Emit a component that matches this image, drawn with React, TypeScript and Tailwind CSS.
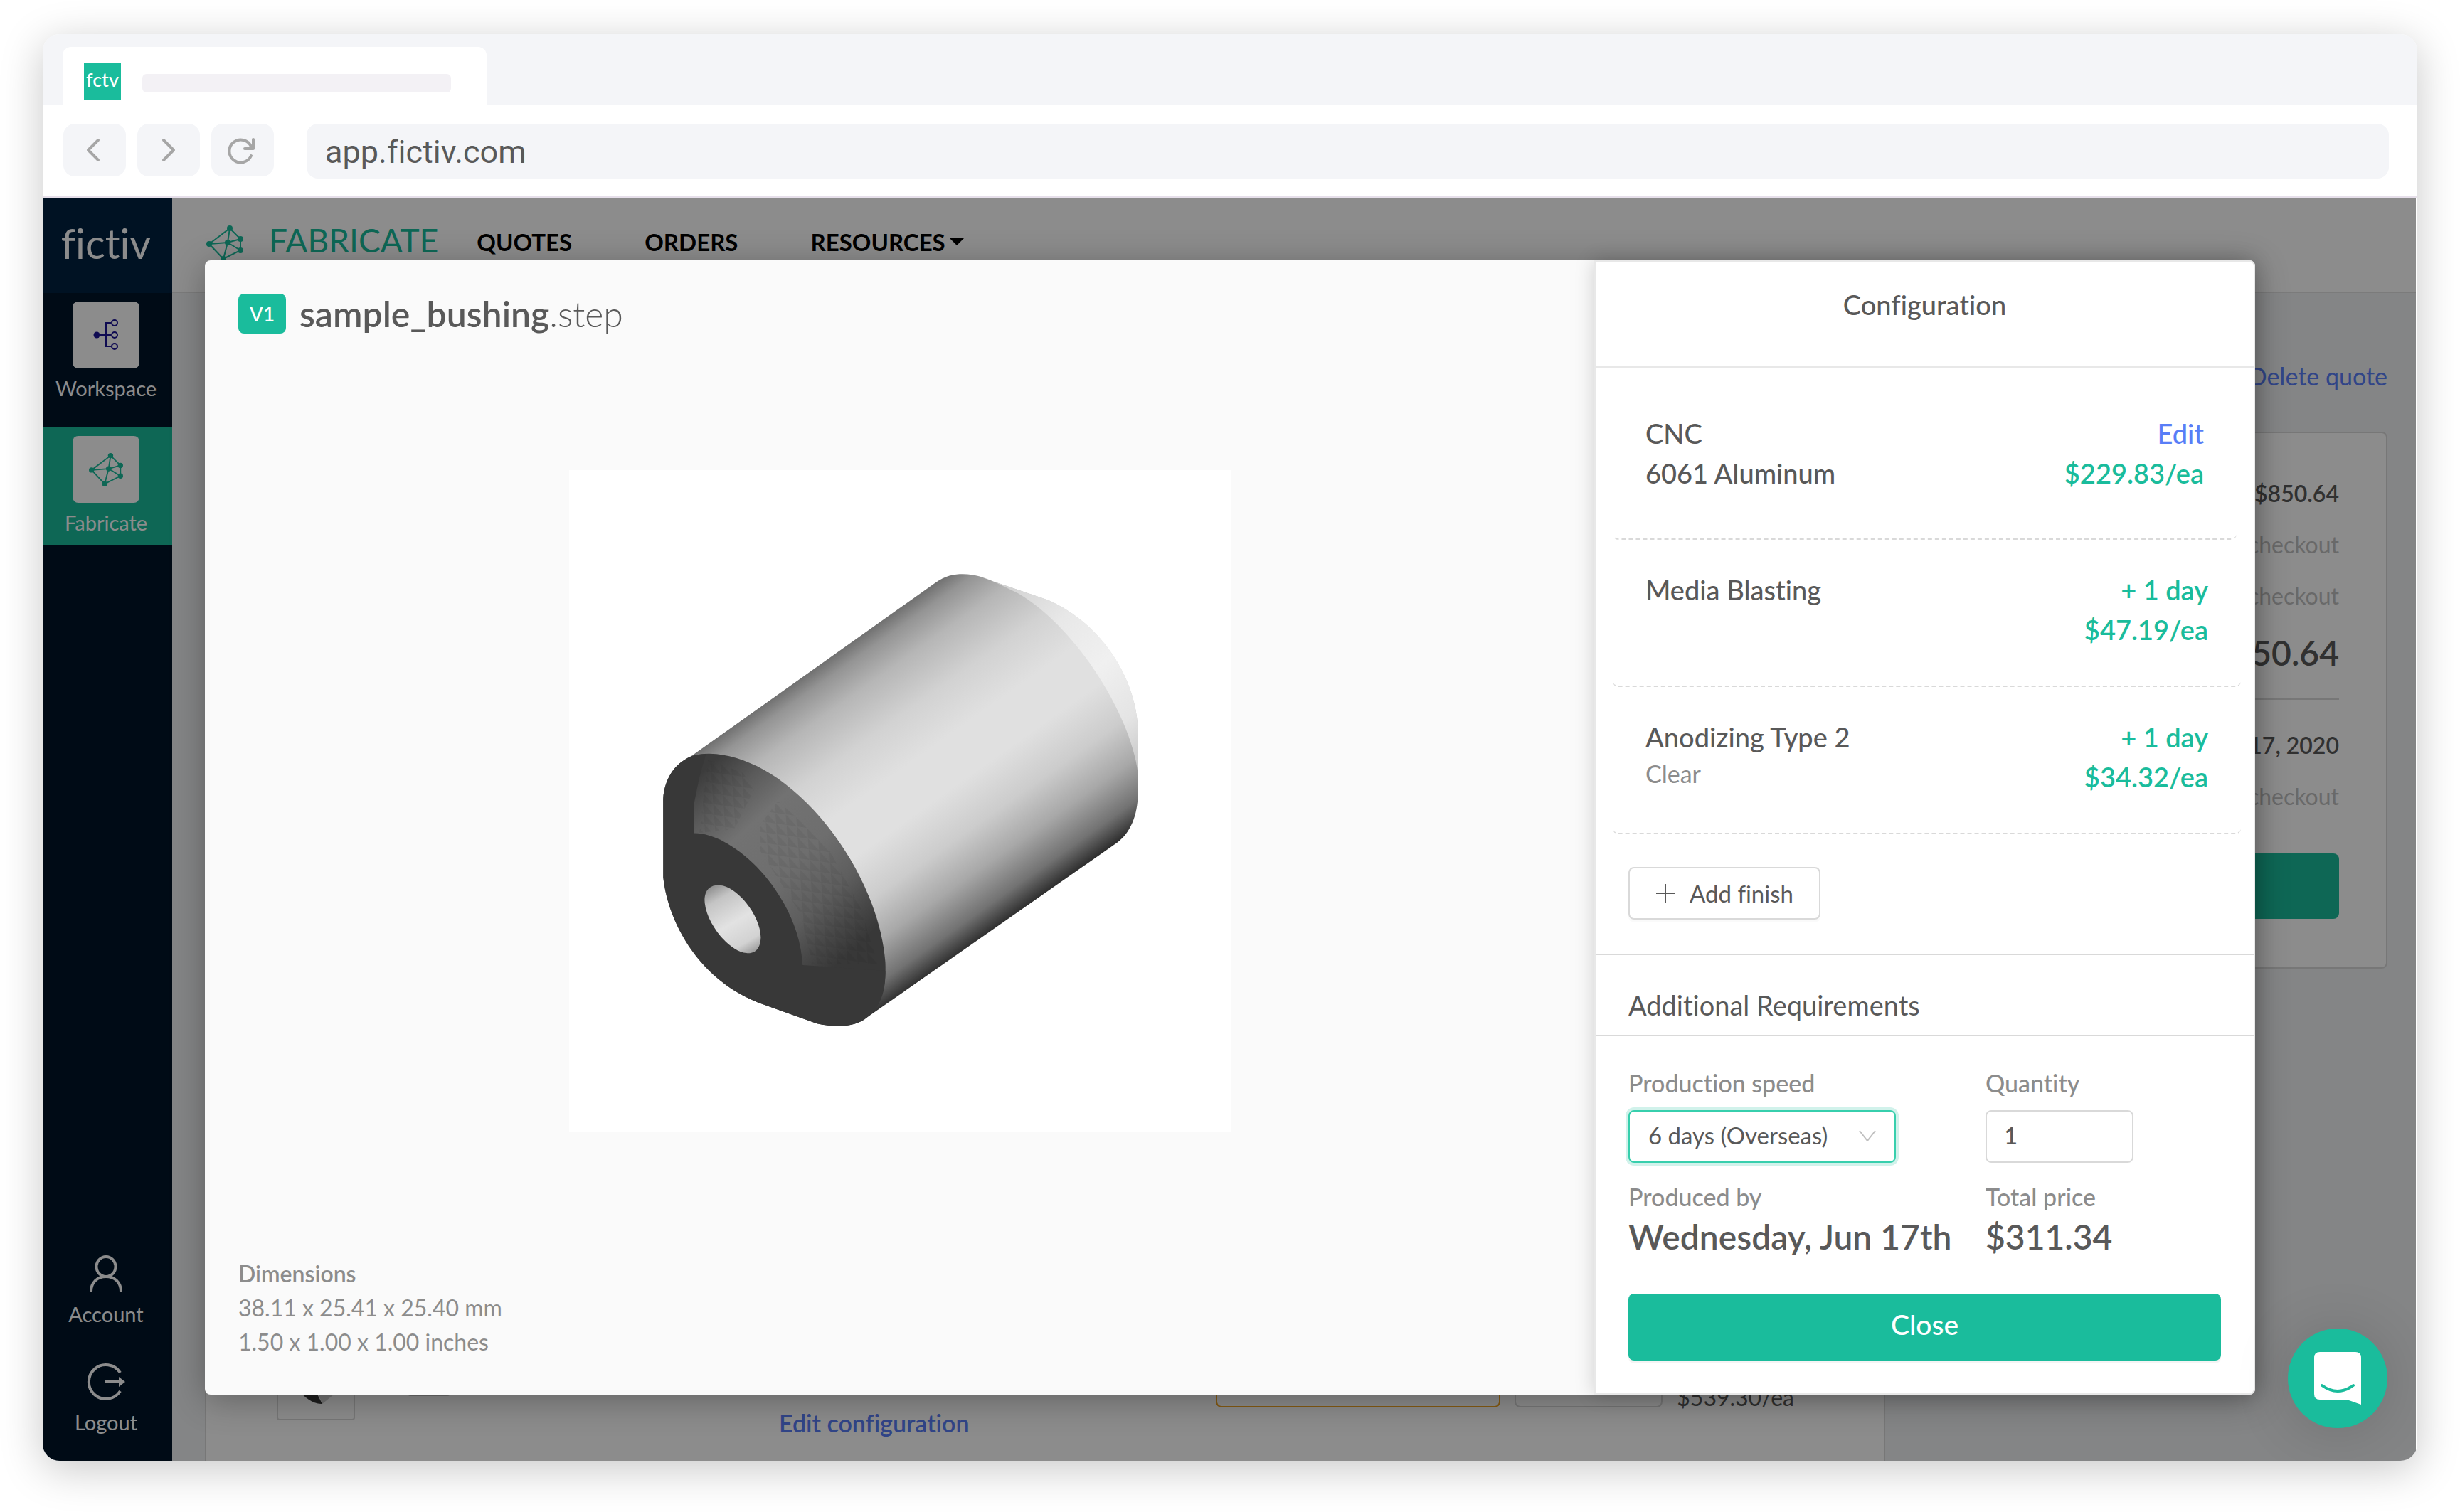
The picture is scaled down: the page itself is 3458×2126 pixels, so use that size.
import React from 'react';

interface Finish {
  name: string;
  option?: string;
  time: string;
  price: string;
}

const finishes: Finish[] = [
  { name: 'Media Blasting', time: '+ 1 day', price: '$47.19/ea' },
  { name: 'Anodizing Type 2', option: 'Clear', time: '+ 1 day', price: '$34.32/ea' },
];

const FabricateIcon: React.FC<{ className?: string }> = ({ className }) => (
  <svg viewBox="0 0 52 52" className={className} fill="none" stroke="#1abc9c" strokeWidth="2" aria-hidden="true">
    <path d="M33 5 4 27 24 48 48 36 48 20 33 5 30 25 24 48M4 27 30 25 48 20M30 25 48 36" />
    <g fill="#1abc9c" stroke="none">
      <circle cx="33" cy="5" r="4" />
      <circle cx="4" cy="27" r="4" />
      <circle cx="24" cy="48" r="4" />
      <circle cx="48" cy="36" r="4" />
      <circle cx="48" cy="20" r="4" />
      <circle cx="30" cy="25" r="4" />
    </g>
  </svg>
);

const WorkspaceIcon: React.FC = () => (
  <svg viewBox="0 0 36 44" className="w-9 h-11" fill="none" stroke="#1d1496" strokeWidth="2" aria-hidden="true">
    <path d="M5 22h20M25 5H18v33h7" />
    <circle cx="5" cy="22" r="4.5" fill="#1d1496" stroke="none" />
    <circle cx="30" cy="5" r="4" />
    <circle cx="30" cy="22" r="4" />
    <circle cx="30" cy="38" r="4" />
  </svg>
);

const BushingModel: React.FC<{ className?: string }> = ({ className }) => (
  <svg viewBox="31 35 1519 1519" className={className} role="img" aria-label="sample_bushing model">
    <defs>
      <linearGradient id="body" gradientUnits="userSpaceOnUse" x1="595" y1="490" x2="1015" y2="1082">
        <stop offset="0" stopColor="#707070" />
        <stop offset="0.05" stopColor="#949494" />
        <stop offset="0.14" stopColor="#b6b6b6" />
        <stop offset="0.28" stopColor="#d2d2d2" />
        <stop offset="0.42" stopColor="#e0e0e0" />
        <stop offset="0.56" stopColor="#e0e0e0" />
        <stop offset="0.7" stopColor="#cccccc" />
        <stop offset="0.82" stopColor="#a8a8a8" />
        <stop offset="0.93" stopColor="#727272" />
        <stop offset="1" stopColor="#303030" />
      </linearGradient>
      <linearGradient id="chamfer" gradientUnits="userSpaceOnUse" x1="300" y1="760" x2="700" y2="1200">
        <stop offset="0" stopColor="#3c3c3c" />
        <stop offset="0.14" stopColor="#5a5a5a" />
        <stop offset="0.28" stopColor="#727272" />
        <stop offset="0.5" stopColor="#6e6e6e" />
        <stop offset="0.68" stopColor="#5e5e5e" />
        <stop offset="0.8" stopColor="#484848" />
        <stop offset="0.9" stopColor="#383838" />
      </linearGradient>
      <linearGradient id="back" gradientUnits="userSpaceOnUse" x1="1000" y1="300" x2="1350" y2="720">
        <stop offset="0" stopColor="#cfcfcf" />
        <stop offset="0.3" stopColor="#e8e8e8" />
        <stop offset="0.55" stopColor="#f0f0f0" />
        <stop offset="0.8" stopColor="#e4e4e4" />
        <stop offset="1" stopColor="#c4c4c4" />
      </linearGradient>
      <linearGradient id="hole" gradientUnits="userSpaceOnUse" x1="365" y1="985" x2="455" y2="1140">
        <stop offset="0" stopColor="#8c8c8c" />
        <stop offset="0.2" stopColor="#c4c4c4" />
        <stop offset="0.55" stopColor="#e2e2e2" />
        <stop offset="0.85" stopColor="#d2d2d2" />
        <stop offset="1" stopColor="#a0a0a0" />
      </linearGradient>
      <pattern id="facets" width="24" height="24" patternUnits="userSpaceOnUse" patternTransform="rotate(8) skewX(12)">
        <path d="M0 0 24 24H0z" fill="#000" fillOpacity="0.05" />
      </pattern>
    </defs>
    <path
      fill="url(#body)"
      d="M310 693 870 295C895 277 915 274 935 274 965 274 985 283 1006 291L1130 333C1250 385 1333 510 1337 630V780C1336 828 1320 868 1290 890L715 1292 500 1000z"
    />
    <path
      fill="url(#back)"
      d="M1006 291 1130 333C1250 385 1333 510 1337 630V730C1320 600 1200 400 1062 318z"
    />
    <path
      fill="url(#chamfer)"
      d="M247 790C250 745 272 710 310 693 360 675 440 694 510 743 640 835 745 1010 757 1165 760 1230 745 1268 715 1292 690 1314 645 1316 600 1306L465 1258C330 1205 258 1075 247 970z"
    />
    <path
      fill="url(#facets)"
      d="M350 700 430 730 455 770 410 860 330 868zM510 795 550 830 630 910 700 1040 740 1170 590 1168 560 1050 470 910 470 850z"
    />
    <path
      fill="#383838"
      d="M345 687 330 740 318 800 318 869C420 870 560 1020 567 1172L757 1185C758 1235 745 1268 715 1292 690 1314 645 1316 600 1306L465 1258C330 1205 258 1075 247 970V790C250 745 272 710 310 693 320 689 332 687 345 687z"
    />
    <path
      fill="url(#hole)"
      d="M370 988C412 985 470 1055 471 1108 470 1138 455 1146 438 1144 400 1142 343 1075 342 1022 343 998 355 990 370 988z"
    />
  </svg>
);

const Sidebar: React.FC = () => (
  <aside className="w-[182px] shrink-0 bg-[#001529] text-white text-[29px] leading-9 flex flex-col">
    <div className="h-[134px] shrink-0 pr-1 pb-1.5 bg-[#002140] flex items-center justify-center text-[58px]">fictiv</div>
    <nav className="flex flex-col gap-6">
      <a href="#workspace" className="h-[165px] pt-3 pr-1 flex flex-col items-center gap-2.5">
        <span className="w-[94px] h-[94px] shrink-0 bg-white rounded-lg flex items-center justify-center">
          <WorkspaceIcon />
        </span>
        Workspace
      </a>
      <a href="#fabricate" className="h-[165px] pt-3 pr-1 bg-[#1abc9c] flex flex-col items-center gap-2.5">
        <span className="w-[94px] h-[94px] shrink-0 bg-white rounded-lg flex items-center justify-center">
          <FabricateIcon className="w-12 h-12" />
        </span>
        Fabricate
      </a>
    </nav>
    <div className="mt-auto pr-1 pb-9 flex flex-col gap-[50px]">
      <a href="#account" className="flex flex-col items-center gap-3">
        <svg viewBox="0 0 54 54" className="w-[54px] h-[54px]" fill="none" stroke="currentColor" strokeWidth="4" aria-hidden="true">
          <ellipse cx="27" cy="17" rx="13.5" ry="14" />
          <path d="M6 52C6 39 15 31 27 31S48 39 48 52" />
        </svg>
        Account
      </a>
      <a href="#logout" className="flex flex-col items-center gap-3">
        <svg viewBox="0 0 54 54" className="w-[54px] h-[54px]" fill="none" stroke="currentColor" strokeWidth="4" aria-hidden="true">
          <path d="M47 14A24 24 0 1 0 47 40" />
          <path d="M25 27H46" />
          <path d="M45 20 54 27 45 34z" fill="currentColor" stroke="none" />
        </svg>
        Logout
      </a>
    </div>
  </aside>
);

const QuotePage: React.FC = () => (
  <div className="flex-1 min-w-0 bg-[#f0f2f5] text-[#595959] flex flex-col">
    <header className="h-[134px] shrink-0 bg-white border-b-2 border-[#e0e0e0] pl-12 pt-7 flex items-start">
      <FabricateIcon className="w-[52px] h-[52px] mt-2.5" />
      <span className="ml-9 text-[46px] leading-[64px] text-[#1abc9c]">FABRICATE</span>
      <nav className="ml-[54px] pt-1 flex gap-[102px] text-[33px] leading-[60px] font-bold text-black">
        <a href="#quotes">QUOTES</a>
        <a href="#orders">ORDERS</a>
        <a href="#resources" className="flex items-center gap-1.5">
          RESOURCES
          <svg viewBox="0 0 20 10" className="w-5 h-2.5" aria-hidden="true">
            <path d="M0 0H20L10 10z" />
          </svg>
        </a>
      </nav>
    </header>

    <main className="flex-1 flex pl-[46px] pr-10 gap-12">
      {/* Part list */}
      <section className="flex-1 min-w-0 bg-white border-x-2 border-[#d9d9d9] flex flex-col justify-end">
        <div className="pl-[99px] pb-[57px] flex items-end">
          <div className="w-[110px] h-[110px] border-2 border-[#d9d9d9] rounded">
            <svg viewBox="0 0 106 106" className="w-full h-full" aria-hidden="true">
              <path d="M16 50 44 50 62 85C50 86 36 76 26 62z" fill="#383838" />
              <path d="M44 40 98 40 90 62 62 85z" fill="#cfcfcf" />
            </svg>
          </div>
          <div className="ml-[74px] mb-[34px] w-[60px] h-8 rounded bg-[#e0e0e0] border-b-2 border-[#c4c4c4]" />
          <a href="#edit" className="ml-[462px] -mb-7 text-[34px] leading-[48px] font-semibold text-[#597ef7]">
            Edit configuration
          </a>
          <div className="ml-auto mb-[18px] w-[400px] h-[76px] border-2 border-[#f5a623] rounded-lg" />
          <div className="ml-5 mb-[18px] w-[208px] h-[76px] border-2 border-[#d9d9d9] rounded-lg" />
          <span className="ml-5 mb-2 mr-[126px] text-[32px] leading-[48px]">$539.30/ea</span>
        </div>
      </section>

      {/* Order summary */}
      <section className="w-[658px] shrink-0 text-[32px] leading-[48px] text-right">
        <a href="#delete" className="block mt-[93px] text-[34px] text-[#597ef7]">Delete quote</a>
        <div className="mt-[54px] pt-[61px] px-[66px] pb-14 bg-white border-2 border-[#d9d9d9] rounded-lg">
          <div className="font-semibold">$850.64</div>
          <div className="mt-6 text-[#bfbfbf]">checkout</div>
          <div className="mt-6 text-[#bfbfbf]">checkout</div>
          <div className="mt-6 text-[48px] leading-[64px] font-semibold">$850.64</div>
          <div className="mt-8 mb-10 border-t-2 border-[#d9d9d9]" />
          <div className="font-semibold">Jun 17, 2020</div>
          <div className="mt-6 text-[#bfbfbf]">checkout</div>
          <button aria-label="Checkout" className="mt-14 w-full h-[92px] rounded-lg bg-[#1abc9c]" />
        </div>
      </section>
    </main>
  </div>
);

const ConfigurationPanel: React.FC = () => (
  <aside className="relative w-[929px] shrink-0 bg-white border-2 border-[#e8e8e8] rounded-r-lg shadow-[0_0_28px_rgba(0,0,0,0.18)] text-[38px] leading-[56px] font-medium">
    <h2 className="pt-8 pb-[59px] text-center border-b-2 border-[#e8e8e8]">Configuration</h2>

    <div className="mx-6 px-[46px] py-16 border-b-2 border-dashed border-[#d9d9d9] rounded-lg flex justify-between">
      <div>
        <div>CNC</div>
        <div>6061 Aluminum</div>
      </div>
      <div className="text-right">
        <a href="#edit-process" className="text-[#597ef7]">Edit</a>
        <div className="font-semibold text-[#1abc9c]">$229.83/ea</div>
      </div>
    </div>

    {finishes.map((finish) => (
      <div
        key={finish.name}
        className="ml-6 mr-[18px] px-[46px] pt-[42px] pb-[51px] border-b-2 border-dashed border-[#d9d9d9] rounded-lg flex justify-between"
      >
        <div>
          <div>{finish.name}</div>
          {finish.option && (
            <div className="text-[34px] leading-[48px] font-normal text-[#8c8c8c]">{finish.option}</div>
          )}
        </div>
        <div className="text-right font-semibold text-[#1abc9c]">
          <div>{finish.time}</div>
          <div>{finish.price}</div>
        </div>
      </div>
    ))}

    <div className="px-[46px] pt-[46px] pb-12 border-b-2 border-[#d9d9d9] flex">
      <button className="h-[74px] px-9 border-2 border-[#d9d9d9] rounded-lg shadow-[0_4px_0_rgba(0,0,0,0.02)] flex items-center gap-5 text-[33px] font-normal">
        <svg viewBox="0 0 28 28" className="w-7 h-7" stroke="currentColor" strokeWidth="2" aria-hidden="true">
          <path d="M14 1V27M1 14H27" />
        </svg>
        Add finish
      </button>
    </div>

    <h3 className="px-[46px] pt-[42px] pb-3.5 font-normal border-b-2 border-[#d9d9d9]">Additional Requirements</h3>

    <div className="px-[46px] pt-[42px] pb-11">
      <div className="grid grid-cols-[502px_1fr] text-[34px] leading-[48px] text-[#8c8c8c]">
        <label htmlFor="speed">Production speed</label>
        <label htmlFor="quantity">Quantity</label>
        <div className="relative mt-3.5 w-[376px]">
          <select
            id="speed"
            className="block w-full h-[74px] pl-[26px] pb-1 appearance-none bg-white border-2 border-[#37cfad] rounded-lg shadow-[0_0_0_4px_rgba(26,188,156,0.2)] text-[33px] font-normal text-[#595959] outline-none"
          >
            <option>6 days (Overseas)</option>
          </select>
          <svg viewBox="0 0 24 16" className="absolute right-7 top-7 w-6 h-4 pointer-events-none" fill="none" stroke="#bfbfbf" strokeWidth="2" aria-hidden="true">
            <path d="M1 1 12 15 23 1" />
          </svg>
        </div>
        <input
          id="quantity"
          type="text"
          defaultValue="1"
          className="mt-3.5 w-[208px] h-[74px] pl-6 pb-1 border-2 border-[#d9d9d9] rounded-lg text-[33px] text-[#595959]"
        />
        <div className="mt-6">Produced by</div>
        <div className="mt-6">Total price</div>
        <div className="text-[48px] leading-[64px] font-semibold text-[#595959]">Wednesday, Jun 17th</div>
        <div className="text-[48px] leading-[64px] font-semibold text-[#595959]">$311.34</div>
      </div>
      <button className="mt-12 w-full h-[94px] pb-2 rounded-lg bg-[#1abc9c] shadow-[0_4px_0_rgba(0,0,0,0.045)] text-[39px] text-white">
        Close
      </button>
    </div>
  </aside>
);

export default function App() {
  return (
    <div className="min-h-screen bg-white pt-12 pl-[60px] pr-[60px] pb-[72px] flex flex-col font-['Lato',sans-serif] [font-variant-ligatures:none] text-[#595959]">
      <div className="flex-1 flex flex-col bg-white rounded-3xl overflow-hidden shadow-[0_12px_60px_rgba(0,0,0,0.22)]">
        {/* Browser chrome */}
        <div className="h-[100px] shrink-0 bg-[#f4f5f8] pl-7 flex items-end">
          <div className="w-[596px] h-[82px] bg-white rounded-t-xl pl-[30px] flex items-center">
            <div className="w-[52px] h-[52px] mt-3.5 bg-[#1abc9c] text-white text-[27px] leading-[48px] font-medium text-center">fctv</div>
            <div className="ml-[30px] mt-5 w-[434px] h-[26px] rounded-md bg-[#f3f1f5]" />
          </div>
        </div>
        <div className="h-[130px] shrink-0 pl-[29px] pr-10 pt-[26px] flex items-start gap-4 border-b-3 border-[#e6dfea]">
          <button aria-label="Back" className="w-[88px] h-[74px] pr-1 rounded-2xl bg-[#f4f5f8] flex items-center justify-center">
            <svg viewBox="0 0 20 34" className="w-5 h-[34px]" fill="none" stroke="#a6a6a6" strokeWidth="4" strokeLinecap="round" strokeLinejoin="round">
              <path d="M17 3 3 17 17 31" />
            </svg>
          </button>
          <button aria-label="Forward" className="w-[88px] h-[74px] rounded-2xl bg-[#f4f5f8] flex items-center justify-center">
            <svg viewBox="0 0 20 34" className="w-5 h-[34px]" fill="none" stroke="#a6a6a6" strokeWidth="4" strokeLinecap="round" strokeLinejoin="round">
              <path d="M3 3 17 17 3 31" />
            </svg>
          </button>
          <button aria-label="Reload" className="w-[88px] h-[74px] pr-1 rounded-2xl bg-[#f4f5f8] flex items-center justify-center">
            <svg viewBox="0 0 40 38" className="w-10 h-[38px]" fill="none" stroke="#a6a6a6" strokeWidth="4" strokeLinecap="round" strokeLinejoin="round">
              <path d="M34 27A16 16 0 1 1 34 14" />
              <path d="M37 4V17H25" />
            </svg>
          </button>
          <input
            aria-label="Address"
            type="text"
            defaultValue="app.fictiv.com"
            className="ml-[30px] flex-1 min-w-0 h-[77px] px-[26px] pt-0.5 rounded-2xl bg-[#f4f5f8] font-['Roboto',sans-serif] text-[45px]"
          />
        </div>

        {/* The quote page with the part dialog stacked over it */}
        <div className="flex-1 grid pr-0.5">
          <div className="col-start-1 row-start-1 min-w-0 flex">
            <Sidebar />
            <QuotePage />
          </div>
          <div className="relative col-start-1 row-start-1 min-w-0 bg-black/45 pt-[88px] pl-[228px] pr-[226px] pb-[93px] flex">
            <div role="dialog" aria-label="sample_bushing.step" className="flex-1 min-w-0 bg-[#fafafa] rounded-lg shadow-[0_8px_48px_rgba(0,0,0,0.3)] flex">
              <section className="flex-1 min-w-0 overflow-hidden px-[47px] pt-[47px] pb-[50px] flex flex-col">
                <div className="flex items-center gap-[19px]">
                  <span className="w-[67px] h-14 rounded-lg bg-[#1abc9c] text-white text-[28px] font-medium flex items-center justify-center">V1</span>
                  <h1 className="text-[50px] leading-[56px]">
                    <span className="font-semibold">sample_bushing</span>
                    <span className="font-light">.step</span>
                  </h1>
                </div>
                <div className="mt-48 mx-auto w-[930px] h-[930px] bg-white">
                  <BushingModel className="w-full h-full" />
                </div>
                <div className="mt-auto text-[32px] leading-[48px] text-[#8c8c8c]">
                  <div className="font-semibold">Dimensions</div>
                  <div>38.11 x 25.41 x 25.40 mm</div>
                  <div>1.50 x 1.00 x 1.00 inches</div>
                </div>
              </section>
              <ConfigurationPanel />
            </div>

            {/* Chat launcher */}
            <button
              aria-label="Open chat"
              className="absolute right-10 bottom-[46px] w-[140px] h-[140px] rounded-full bg-[#1abc9c] shadow-[0_4px_80px_rgba(0,0,0,0.15)] flex items-center justify-center"
            >
              <svg viewBox="0 0 66 74" className="w-[66px] h-[74px]" aria-hidden="true">
                <path d="M8 0H58Q66 0 66 8V74L46 67H8Q0 67 0 59V8Q0 0 8 0z" fill="#fff" />
                <path d="M11 47Q33 63 55 47" fill="none" stroke="#1abc9c" strokeWidth="4" strokeLinecap="round" />
              </svg>
            </button>
          </div>
        </div>
      </div>
    </div>
  );
}
